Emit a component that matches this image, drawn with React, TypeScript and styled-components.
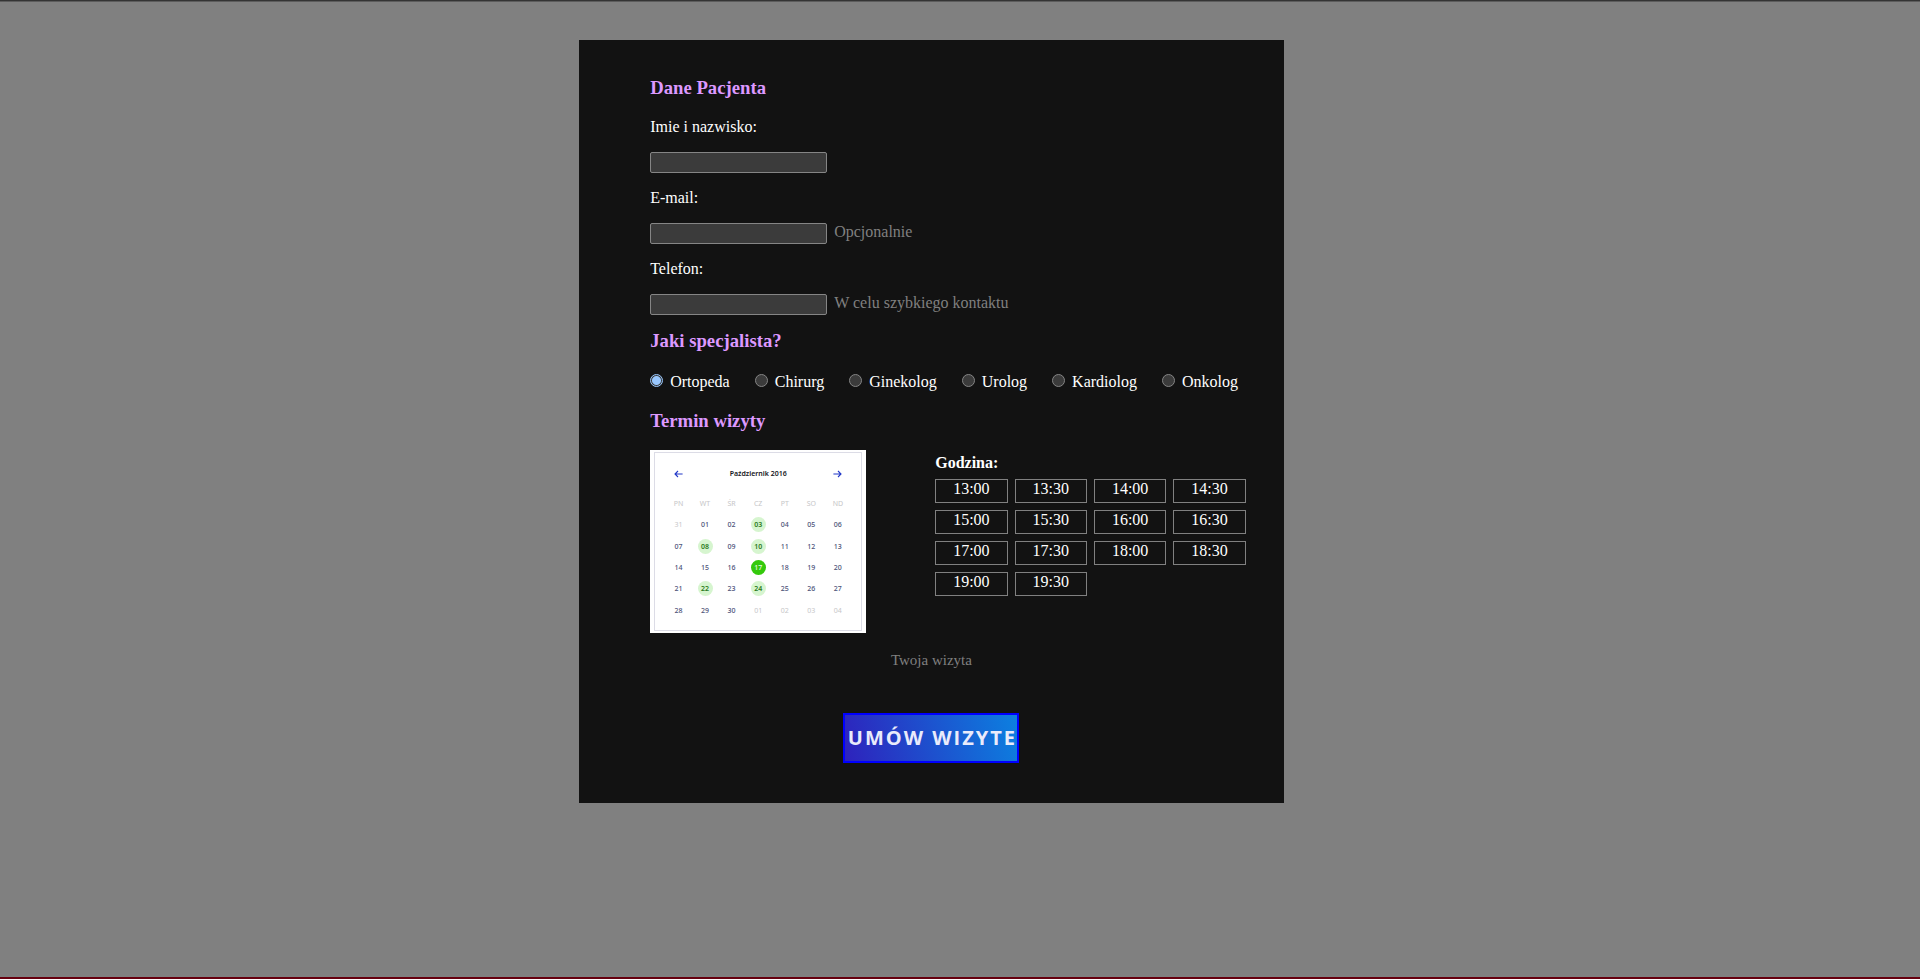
import React, { useState } from "react";
import styled, { createGlobalStyle, css } from "styled-components";

const GlobalStyle = createGlobalStyle`
  *, *::before, *::after { box-sizing: border-box; }
  body {
    margin: 0;
    background: #808080;
    color: #fff;
    font-family: "Liberation Serif", "Times New Roman", serif;
    font-size: 16px;
    line-height: 18px;
  }
`;

const Page = styled.div`
  min-height: 100vh;
  padding: 39px 8px;
  border-top: 1px solid #343434;
  border-bottom: 2px solid #66000f;
  box-shadow: inset 0 1px 0 #5c5c5c;
`;

const Card = styled.form`
  width: 37%;
  min-width: 704px;
  margin-left: 30%;
  padding: 37px 38px 40px 71px;
  background: #121212;
`;

const Heading = styled.h3`
  margin: 0;
  line-height: 22px;
  color: #dd99ff;
`;

const Section = styled.section`
  display: flex;
  flex-direction: column;
  align-items: flex-start;
  gap: 16px;
  margin-bottom: 15px;
`;

const Label = styled.label`
  display: block;
`;

const FieldRow = styled.div`
  display: flex;
  align-items: flex-start;
  gap: 7px;
`;

const TextInput = styled.input`
  width: 177px;
  height: 21px;
  padding: 1px 2px;
  border: 1px solid #858585;
  border-radius: 2px;
  background: #3b3b3b;
  color: #fff;
  font-size: 13px;
`;

const Hint = styled.span`
  color: #808080;
`;

const Summary = styled(Hint)`
  font-size: 15px;
`;

const Fields = styled.div`
  display: flex;
  flex-direction: column;
  gap: 16px;
  padding-top: 3px;
`;

const RadioGroup = styled.div`
  display: flex;
  flex-wrap: wrap;
  gap: 25px;
  padding: 5px 0 4px;
`;

const RadioLabel = styled.label`
  display: flex;
  gap: 7px;
`;

const Radio = styled.input`
  appearance: none;
  width: 13px;
  height: 13px;
  margin: 1px 0 0;
  border: 1px solid #858585;
  border-radius: 50%;
  background: #3b3b3b;

  &:checked {
    border-color: #99c8ff;
    background: radial-gradient(circle, #99c8ff 4px, #3b3b3b 5px);
  }
`;

const Schedule = styled.div`
  display: flex;
  align-items: flex-start;
  gap: 69px;
  margin-top: 18px;
`;

const CalendarCard = styled.div`
  flex: none;
  width: 216px;
  padding: 2px 4px;
  background: #fff;
  font-family: "Noto Sans", "Open Sans", sans-serif;
  font-size: 7px;
  line-height: 10px;
`;

const CalendarFrame = styled.div`
  height: 179px;
  padding: 16px 10px 0;
  border: 1px solid #dcdce6;
`;

const CalendarHeader = styled.div`
  display: flex;
  align-items: center;
  justify-content: space-between;
  padding: 0 9px;
  margin-bottom: 14px;
  color: #16161c;
  font-weight: 600;
`;

const ArrowButton = styled.button`
  display: flex;
  padding: 0;
  border: 0;
  background: none;
  cursor: pointer;
`;

const CalendarTable = styled.table`
  width: 100%;
  height: 128px;
  table-layout: fixed;
  border-collapse: collapse;
  text-align: center;

  th, td { height: 21px; padding: 0; }
  th { color: #c6c6c8; font-weight: 400; }
`;

type DayKind = "plain" | "muted" | "free" | "selected";

const Day = styled.span<{ $kind: DayKind }>`
  display: block;
  width: 15px;
  margin: 0 auto;
  border-radius: 50%;
  line-height: 15px;
  font-weight: 500;
  color: #4c5278;
  ${({ $kind }) => $kind === "muted" && css`color: #c6c6c8; font-weight: 400;`}
  ${({ $kind }) => $kind === "free" && css`color: #2b7a1c; background: #d6f5cf; font-weight: 600;`}
  ${({ $kind }) => $kind === "selected" && css`color: #e4fbe0; background: #34c90c;`}
`;

const Hours = styled.div`
  flex: 1;
  padding-top: 4px;
`;

const HoursTitle = styled.strong`
  display: block;
  margin-bottom: 7px;
`;

const HourGrid = styled.div`
  display: grid;
  grid-template-columns: repeat(4, 1fr);
  gap: 7px;
`;

const HourButton = styled.button`
  height: 24px;
  padding: 0 0 4px;
  border: 1px solid #808080;
  background: transparent;
  color: #fff;
  font: inherit;
  line-height: 16px;
  cursor: pointer;
`;

const Footer = styled.div`
  display: flex;
  flex-direction: column;
  align-items: center;
  gap: 44px;
  margin: 18px 0 0 -33px;
`;

const SubmitButton = styled.button`
  width: 176px;
  height: 50px;
  padding: 0 0 2px 2px;
  border: 2px solid #0000ff;
  background: linear-gradient(75deg, #2e22bc, #0c80e0);
  color: #e9ebfb;
  font-family: "Open Sans", "Noto Sans", sans-serif;
  font-size: 20px;
  font-weight: 700;
  letter-spacing: 2px;
  white-space: nowrap;
  cursor: pointer;
`;

const fields = [
  { id: "name", label: "Imie i nazwisko:", type: "text", hint: "" },
  { id: "email", label: "E-mail:", type: "email", hint: "Opcjonalnie" },
  { id: "phone", label: "Telefon:", type: "tel", hint: "W celu szybkiego kontaktu" },
];

const specialists = ["Ortopeda", "Chirurg", "Ginekolog", "Urolog", "Kardiolog", "Onkolog"];

const weekdays = ["PN", "WT", "ŚR", "CZ", "PT", "SO", "ND"];

const weeks = [
  ["31", "01", "02", "03", "04", "05", "06"],
  ["07", "08", "09", "10", "11", "12", "13"],
  ["14", "15", "16", "17", "18", "19", "20"],
  ["21", "22", "23", "24", "25", "26", "27"],
  ["28", "29", "30", "01", "02", "03", "04"],
];

const freeDays = ["03", "08", "10", "22", "24"];

const hours = [
  "13:00", "13:30", "14:00", "14:30",
  "15:00", "15:30", "16:00", "16:30",
  "17:00", "17:30", "18:00", "18:30",
  "19:00", "19:30",
];

function dayKind(week: number, column: number, day: string): DayKind {
  if ((week === 0 && column === 0) || (week === 4 && column > 2)) return "muted";
  if (day === "17") return "selected";
  return freeDays.includes(day) ? "free" : "plain";
}

function Arrow({ direction }: { direction: "left" | "right" }) {
  return (
    <svg width="9" height="8" viewBox="0 0 9 8" fill="none" stroke="#2238c8" strokeWidth="1.1">
      <path d={direction === "left" ? "M8.6 4H1M4 1L1 4l3 3" : "M.4 4H8M5 1l3 3-3 3"} />
    </svg>
  );
}

function Calendar() {
  return (
    <CalendarCard>
      <CalendarFrame>
        <CalendarHeader>
          <ArrowButton type="button" aria-label="Poprzedni miesiąc"><Arrow direction="left" /></ArrowButton>
          <span>Październik 2016</span>
          <ArrowButton type="button" aria-label="Następny miesiąc"><Arrow direction="right" /></ArrowButton>
        </CalendarHeader>
        <CalendarTable>
          <thead>
            <tr>{weekdays.map((name) => <th key={name} scope="col">{name}</th>)}</tr>
          </thead>
          <tbody>
            {weeks.map((week, row) => (
              <tr key={row}>
                {week.map((day, column) => (
                  <td key={column}><Day $kind={dayKind(row, column, day)}>{day}</Day></td>
                ))}
              </tr>
            ))}
          </tbody>
        </CalendarTable>
      </CalendarFrame>
    </CalendarCard>
  );
}

export default function App() {
  const [specialist, setSpecialist] = useState("Ortopeda");

  return (
    <>
      <GlobalStyle />
      <Page>
        <Card onSubmit={(event) => event.preventDefault()}>
          <Section>
            <Heading>Dane Pacjenta</Heading>
            <Fields>
              {fields.map((field) => (
                <React.Fragment key={field.id}>
                  <Label htmlFor={field.id}>{field.label}</Label>
                  <FieldRow>
                    <TextInput id={field.id} type={field.type} />
                    {field.hint && <Hint>{field.hint}</Hint>}
                  </FieldRow>
                </React.Fragment>
              ))}
            </Fields>
          </Section>
          <Section>
            <Heading>Jaki specjalista?</Heading>
            <RadioGroup role="radiogroup" aria-label="Jaki specjalista?">
              {specialists.map((name) => (
                <RadioLabel key={name}>
                  <Radio
                    type="radio"
                    name="specialist"
                    value={name}
                    checked={specialist === name}
                    onChange={() => setSpecialist(name)}
                  />
                  {name}
                </RadioLabel>
              ))}
            </RadioGroup>
          </Section>
          <Heading>Termin wizyty</Heading>
          <Schedule>
            <Calendar />
            <Hours>
              <HoursTitle>Godzina:</HoursTitle>
              <HourGrid>
                {hours.map((hour) => <HourButton key={hour} type="button">{hour}</HourButton>)}
              </HourGrid>
            </Hours>
          </Schedule>
          <Footer>
            <Summary>Twoja wizyta</Summary>
            <SubmitButton type="submit">UMÓW WIZYTE</SubmitButton>
          </Footer>
        </Card>
      </Page>
    </>
  );
}
